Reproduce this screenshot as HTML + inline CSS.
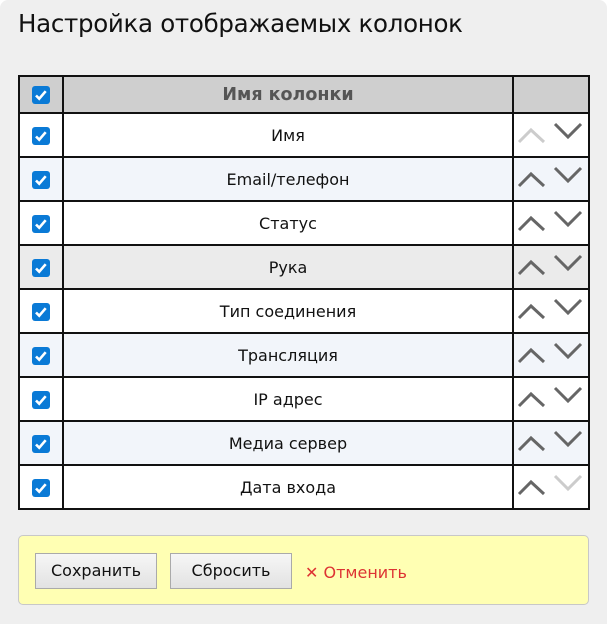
<!DOCTYPE html>
<html><head><meta charset="utf-8"><style>
body{margin:0;width:607px;height:624px;background:#fff;font-family:"DejaVu Sans","Liberation Sans",sans-serif;overflow:hidden}
.dlg{position:absolute;left:0;top:0;width:607px;height:624px;background:#efefef;border-radius:8px 8px 0 0}
h1{position:absolute;left:18px;top:9px;margin:0;font-weight:normal;font-size:24.5px;color:#111;letter-spacing:-0.3px}
table{position:absolute;left:18px;top:75px;border-collapse:collapse;width:572px}
td,th{border:2px solid #111;padding:0;text-align:center;font-size:16px;color:#111}
th{background:#cfcfcf;height:35px;font-size:17.5px;color:#555;font-weight:bold}
td{height:42px}
.c1{width:42px}.c3{width:74px;position:relative}
.b{background:#f2f5fa}.g{background:#ebebeb}.w{background:#fff}
.cb{display:inline-block;width:18px;height:18px;background:#0a7ad6;border-radius:3px;vertical-align:middle;position:relative}
.cb svg{position:absolute;left:0;top:0}
.ar{position:absolute;left:0;top:0}
.foot{position:absolute;left:18px;top:535px;width:569px;height:68px;background:#ffffb3;border:1px solid #c8c8c8;border-radius:5px}
.btn{position:absolute;top:17px;height:34px;border:1px solid #aaa;background:linear-gradient(#f6f6f6,#e2e2e2);font-size:16px;color:#111;line-height:34px;text-align:center}
.cancel{position:absolute;left:286px;top:27px;color:#d33;font-size:16px}
</style></head><body><div class="dlg">
<h1>Настройка отображаемых колонок</h1>
<table>
<tr><th class="c1"><span class="cb"><svg width="18" height="18"><path d="M4 9.5l3.2 3.2 6.5-7.5" stroke="#fff" stroke-width="2.6" fill="none"/></svg></span></th><th>Имя колонки</th><th class="c3"></th></tr>
<tr class="w"><td class="c1"><span class="cb"><svg width="18" height="18"><path d="M4 9.5l3.2 3.2 6.5-7.5" stroke="#fff" stroke-width="2.6" fill="none"/></svg></span></td><td>Имя</td><td class="c3"><svg class="ar" width="74" height="42"><path d="M5 28L17 16 30 28" stroke="#ccc" stroke-width="3" fill="none"/><path d="M41 10L54 23 67 10" stroke="#666" stroke-width="3" fill="none"/></svg></td></tr>
<tr class="b"><td class="c1"><span class="cb"><svg width="18" height="18"><path d="M4 9.5l3.2 3.2 6.5-7.5" stroke="#fff" stroke-width="2.6" fill="none"/></svg></span></td><td>Email/телефон</td><td class="c3"><svg class="ar" width="74" height="42"><path d="M5 28L17 16 30 28" stroke="#666" stroke-width="3" fill="none"/><path d="M41 10L54 23 67 10" stroke="#666" stroke-width="3" fill="none"/></svg></td></tr>
<tr class="w"><td class="c1"><span class="cb"><svg width="18" height="18"><path d="M4 9.5l3.2 3.2 6.5-7.5" stroke="#fff" stroke-width="2.6" fill="none"/></svg></span></td><td>Статус</td><td class="c3"><svg class="ar" width="74" height="42"><path d="M5 28L17 16 30 28" stroke="#666" stroke-width="3" fill="none"/><path d="M41 10L54 23 67 10" stroke="#666" stroke-width="3" fill="none"/></svg></td></tr>
<tr class="g"><td class="c1"><span class="cb"><svg width="18" height="18"><path d="M4 9.5l3.2 3.2 6.5-7.5" stroke="#fff" stroke-width="2.6" fill="none"/></svg></span></td><td>Рука</td><td class="c3"><svg class="ar" width="74" height="42"><path d="M5 28L17 16 30 28" stroke="#666" stroke-width="3" fill="none"/><path d="M41 10L54 23 67 10" stroke="#666" stroke-width="3" fill="none"/></svg></td></tr>
<tr class="w"><td class="c1"><span class="cb"><svg width="18" height="18"><path d="M4 9.5l3.2 3.2 6.5-7.5" stroke="#fff" stroke-width="2.6" fill="none"/></svg></span></td><td>Тип соединения</td><td class="c3"><svg class="ar" width="74" height="42"><path d="M5 28L17 16 30 28" stroke="#666" stroke-width="3" fill="none"/><path d="M41 10L54 23 67 10" stroke="#666" stroke-width="3" fill="none"/></svg></td></tr>
<tr class="b"><td class="c1"><span class="cb"><svg width="18" height="18"><path d="M4 9.5l3.2 3.2 6.5-7.5" stroke="#fff" stroke-width="2.6" fill="none"/></svg></span></td><td>Трансляция</td><td class="c3"><svg class="ar" width="74" height="42"><path d="M5 28L17 16 30 28" stroke="#666" stroke-width="3" fill="none"/><path d="M41 10L54 23 67 10" stroke="#666" stroke-width="3" fill="none"/></svg></td></tr>
<tr class="w"><td class="c1"><span class="cb"><svg width="18" height="18"><path d="M4 9.5l3.2 3.2 6.5-7.5" stroke="#fff" stroke-width="2.6" fill="none"/></svg></span></td><td>IP адрес</td><td class="c3"><svg class="ar" width="74" height="42"><path d="M5 28L17 16 30 28" stroke="#666" stroke-width="3" fill="none"/><path d="M41 10L54 23 67 10" stroke="#666" stroke-width="3" fill="none"/></svg></td></tr>
<tr class="b"><td class="c1"><span class="cb"><svg width="18" height="18"><path d="M4 9.5l3.2 3.2 6.5-7.5" stroke="#fff" stroke-width="2.6" fill="none"/></svg></span></td><td>Медиа сервер</td><td class="c3"><svg class="ar" width="74" height="42"><path d="M5 28L17 16 30 28" stroke="#666" stroke-width="3" fill="none"/><path d="M41 10L54 23 67 10" stroke="#666" stroke-width="3" fill="none"/></svg></td></tr>
<tr class="w"><td class="c1"><span class="cb"><svg width="18" height="18"><path d="M4 9.5l3.2 3.2 6.5-7.5" stroke="#fff" stroke-width="2.6" fill="none"/></svg></span></td><td>Дата входа</td><td class="c3"><svg class="ar" width="74" height="42"><path d="M5 28L17 16 30 28" stroke="#666" stroke-width="3" fill="none"/><path d="M41 10L54 23 67 10" stroke="#ccc" stroke-width="3" fill="none"/></svg></td></tr>
</table>
<div class="foot">
<div class="btn" style="left:16px;width:120px">Сохранить</div>
<div class="btn" style="left:151px;width:120px">Сбросить</div>
<div class="cancel"><b>✕</b> Отменить</div>
</div>
</div></body></html>
